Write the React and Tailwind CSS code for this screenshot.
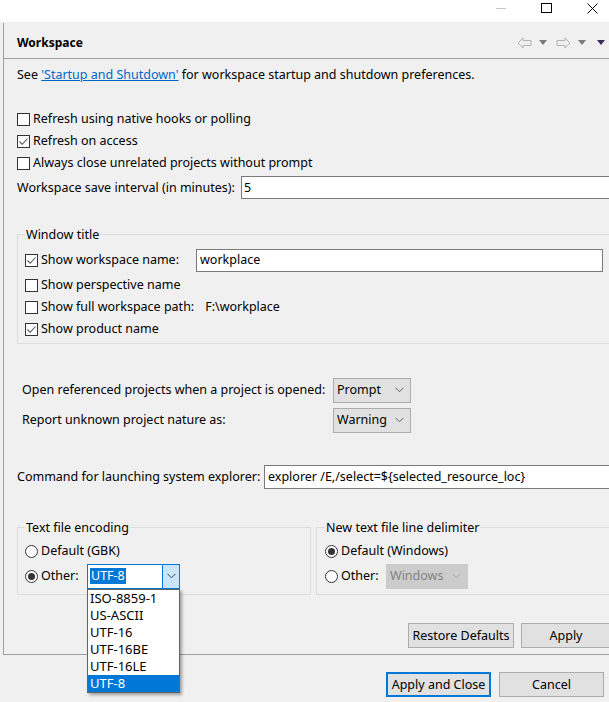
import React from "react";

const Check = ({ on }) => (
  <span className="w-[13px] h-[13px] border border-[#333333] bg-white flex items-center justify-center shrink-0">
    {on && (
      <svg width="11" height="11" viewBox="0 0 11 11">
        <path d="M1.5 5.5 L4.2 8.3 L9.5 2.5" fill="none" stroke="#555555" strokeWidth="1.1" />
      </svg>
    )}
  </span>
);

const Radio = ({ on }) => (
  <span className="w-[13px] h-[13px] rounded-full border border-[#333333] bg-white flex items-center justify-center shrink-0">
    {on && <span className="w-[7px] h-[7px] rounded-full bg-[#333333]" />}
  </span>
);

const Chevron = ({ color = "#606060" }) => (
  <svg width="9" height="6" viewBox="0 0 9 6">
    <path d="M0.5 0.8 L4.5 4.8 L8.5 0.8" fill="none" stroke={color} strokeWidth="1" />
  </svg>
);

const Select = ({ value }) => (
  <div className="w-[78px] h-[25px] border border-[#adadad] bg-[#e1e1e1] flex items-center justify-between pl-[3px] pr-[6px]">
    <span>{value}</span>
    <Chevron />
  </div>
);

// checkbox + label, optional fixed label width and trailing content
const CheckRow = ({ on, label, h = "h-[22px]", w = "", children }) => (
  <div className={`flex items-center whitespace-nowrap ${h}`}>
    <Check on={on} />
    <span className={`ml-[3px] shrink-0 ${w}`}>{label}</span>
    {children}
  </div>
);

const Arrow = ({ dir }) => (
  <svg width="15" height="12" viewBox="0 0 15 12">
    <path
      d={dir === "left" ? "M1 6 L6 1 L6 3.5 L14 3.5 L14 8.5 L6 8.5 L6 11 Z" : "M14 6 L9 1 L9 3.5 L1 3.5 L1 8.5 L9 8.5 L9 11 Z"}
      fill="none"
      stroke="#b4b4b4"
      strokeWidth="1"
    />
  </svg>
);

const Tri = ({ color }) => (
  <svg width="8" height="5" viewBox="0 0 8 5">
    <path d="M0 0 L8 0 L4 5 Z" fill={color} />
  </svg>
);

const encodings = ["ISO-8859-1", "US-ASCII", "UTF-16", "UTF-16BE", "UTF-16LE", "UTF-8"];

export default function App() {
  return (
    <div className="w-[609px] h-[702px] overflow-hidden bg-[#f0f0f0] text-black text-[12.5px] leading-[16px] font-['Noto_Sans','Liberation_Sans',sans-serif]">
      {/* title bar */}
      <div className="h-[23px] bg-white border-b border-[#ececec] flex items-start justify-end">
        <div className="w-[10px] h-[1px] bg-[#c8c8c8] mt-[8px] mr-[35px]" />
        <div className="w-[11px] h-[10px] border border-black mt-[3px] mr-[35px]" />
        <svg width="11" height="11" viewBox="0 0 11 11" className="mt-[3px] mr-[11px]">
          <path d="M0.5 0.5 L10.5 10.5 M10.5 0.5 L0.5 10.5" stroke="#000" strokeWidth="1" />
        </svg>
      </div>

      {/* preference page */}
      <div className="ml-[3px] border-l border-b border-[#a0a0a0] h-[632px]">
        <div className="h-[36px] border-b border-[#a0a0a0] flex items-center pl-[13px] pr-[4px] pt-[4px]">
          <span className="font-bold text-[12px]">Workspace</span>
          <div className="ml-auto flex items-center">
            <Arrow dir="left" />
            <span className="ml-[7px]"><Tri color="#7a7a7a" /></span>
            <span className="ml-[9px]"><Arrow dir="right" /></span>
            <span className="ml-[7px]"><Tri color="#7a7a7a" /></span>
            <span className="ml-[11px]"><Tri color="#3c2a5a" /></span>
          </div>
        </div>

        <div className="pl-[13px] flex flex-col">
          <div className="h-[20px] flex items-center mt-[6px]">
            See&nbsp;<span className="text-[#0066cc] underline">'Startup and Shutdown'</span>&nbsp;for workspace startup and shutdown preferences.
          </div>

          <div className="mt-[23px]">
            <CheckRow label="Refresh using native hooks or polling" />
            <CheckRow on label="Refresh on access" />
            <CheckRow label="Always close unrelated projects without prompt" />
          </div>

          <div className="h-[25px] flex items-center mt-[1px]">
            <span className="w-[224px] shrink-0">Workspace save interval (in minutes):</span>
            <div className="h-[23px] w-[400px] shrink-0 bg-white border border-[#7a7a7a] flex items-center pl-[2px]">5</div>
          </div>

          <fieldset className="mt-[26px] w-[620px] border border-[#dcdcdc] pl-[7px] pb-[3px]">
            <legend className="px-[1px] leading-[17px]">Window title</legend>
            <div className="pt-[3px]">
              <CheckRow on label="Show workspace name:" h="h-[28px]" w="w-[155px]">
                <div className="w-[407px] h-[23px] bg-white border border-[#7a7a7a] flex items-center pl-[3px]">
                  workplace
                </div>
              </CheckRow>
              <CheckRow label="Show perspective name" />
              <CheckRow label="Show full workspace path:">
                <span className="ml-[11px]">F:\workplace</span>
              </CheckRow>
              <CheckRow on label="Show product name" />
            </div>
          </fieldset>

          <div className="pl-[5px] mt-[33px] flex items-center h-[26px]">
            <span className="w-[311px] shrink-0">Open referenced projects when a project is opened:</span>
            <Select value="Prompt" />
          </div>
          <div className="pl-[5px] mt-[4px] flex items-center h-[26px]">
            <span className="w-[311px] shrink-0">Report unknown project nature as:</span>
            <Select value="Warning" />
          </div>

          <div className="mt-[32px] flex items-center h-[24px]">
            <span className="w-[247px] shrink-0">Command for launching system explorer:</span>
            <div className="h-[24px] w-[400px] shrink-0 bg-white border border-[#7a7a7a] flex items-center pl-[3px]">
              explorer /E,/select=${"{"}selected_resource_loc{"}"}
            </div>
          </div>

          <div className="mt-[30px] flex gap-[5px]">
            <fieldset className="w-[294px] shrink-0 border border-[#dcdcdc] pl-[7px] pb-[5px]">
              <legend className="px-[1px] leading-[17px]">Text file encoding</legend>
              <div className="pt-[3px]">
                <div className="h-[24px] flex items-center">
                  <Radio />
                  <span className="ml-[3px]">Default (GBK)</span>
                </div>
                <div className="h-[26px] flex items-center">
                  <div className="w-[62px] flex items-center shrink-0">
                    <Radio on />
                    <span className="ml-[3px]">Other:</span>
                  </div>
                  <div className="relative">
                    <div className="w-[93px] h-[25px] border border-[#0078d7] bg-white flex items-center">
                      <div className="flex-1 pl-[2px] flex items-center">
                        <span className="bg-[#0078d7] text-white px-[1px]">UTF-8</span>
                      </div>
                      <div className="w-[17px] h-full bg-[#cce4f7] border-l border-[#0078d7] flex items-center justify-center">
                        <Chevron color="#404040" />
                      </div>
                    </div>
                    <div className="absolute left-0 top-[25px] z-10 w-[93px] bg-white border border-[#646464] shadow-[2px_2px_3px_rgba(0,0,0,0.35)] text-[13px]">
                      {encodings.map((e) => (
                        <div
                          key={e}
                          className={`h-[17px] leading-[17px] pl-[2px] ${e === "UTF-8" ? "bg-[#0078d7] text-white" : ""}`}
                        >
                          {e}
                        </div>
                      ))}
                    </div>
                  </div>
                </div>
              </div>
            </fieldset>

            <fieldset className="w-[320px] shrink-0 border border-[#dcdcdc] pl-[8px] pb-[5px]">
              <legend className="px-[1px] leading-[17px]">New text file line delimiter</legend>
              <div className="pt-[3px]">
                <div className="h-[24px] flex items-center">
                  <Radio on />
                  <span className="ml-[3px]">Default (Windows)</span>
                </div>
                <div className="h-[26px] flex items-center">
                  <div className="w-[61px] flex items-center shrink-0">
                    <Radio />
                    <span className="ml-[3px]">Other:</span>
                  </div>
                  <div className="w-[82px] h-[25px] border border-[#cccccc] bg-[#cccccc] text-[#838383] flex items-center justify-between pl-[3px] pr-[6px]">
                    <span>Windows</span>
                    <Chevron color="#a8a8a8" />
                  </div>
                </div>
              </div>
            </fieldset>
          </div>

          <div className="mt-[28px] flex justify-end gap-[7px] -mr-[2px]">
            <button className="w-[106px] h-[25px] bg-[#e1e1e1] border border-[#adadad]">Restore Defaults</button>
            <button className="w-[90px] h-[25px] bg-[#e1e1e1] border border-[#adadad]">Apply</button>
          </div>
        </div>
      </div>

      {/* dialog buttons */}
      <div className="mt-[17px] flex justify-end gap-[8px] pr-[5px]">
        <button className="w-[105px] h-[25px] bg-[#e1e1e1] border-2 border-[#0078d7]">Apply and Close</button>
        <button className="w-[105px] h-[25px] bg-[#e1e1e1] border border-[#adadad]">Cancel</button>
      </div>
    </div>
  );
}
